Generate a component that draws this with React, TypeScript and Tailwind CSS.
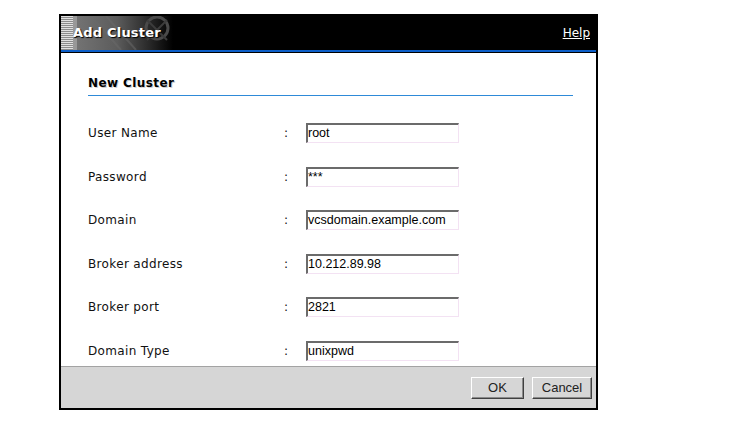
import React from 'react';

const fields = [
  { label: 'User Name', value: 'root' },
  { label: 'Password', value: '***' },
  { label: 'Domain', value: 'vcsdomain.example.com' },
  { label: 'Broker address', value: '10.212.89.98' },
  { label: 'Broker port', value: '2821' },
  { label: 'Domain Type', value: 'unixpwd' },
];

// faded grey banner graphic behind the dialog title
const HeaderArt = () => (
  <svg width="112" height="34" viewBox="0 0 112 34" className="absolute left-0 top-0">
    <defs>
      <linearGradient id="fade" x1="0" x2="1" y1="0" y2="0">
        <stop offset="0" stopColor="#7c7c7c" />
        <stop offset="0.5" stopColor="#5c5c5c" />
        <stop offset="0.8" stopColor="#262626" />
        <stop offset="1" stopColor="#000" />
      </linearGradient>
      <pattern id="lines" width="2" height="2" patternUnits="userSpaceOnUse">
        <rect width="2" height="1" fill="#e0e0e0" />
        <rect y="1" width="2" height="1" fill="#8c8c8c" />
      </pattern>
    </defs>
    <rect width="112" height="34" fill="url(#fade)" />
    <rect width="12" height="34" fill="url(#lines)" />
    <rect x="12" width="4" height="34" fill="#a8a8a8" opacity="0.7" />
    <path d="M30 0 L60 34 M45 0 L75 34" stroke="#6a6a6a" strokeWidth="2" opacity="0.5" />
    <circle cx="96" cy="12" r="11" fill="none" stroke="#4a4a4a" strokeWidth="3" />
    <path d="M86 4 L106 24 M106 4 L86 24" stroke="#3c3c3c" strokeWidth="2" />
  </svg>
);

export default function App() {
  return (
    <div className="w-[733px] h-[438px] bg-white pl-[59px] pt-[14px]" style={{ fontFamily: '"DejaVu Sans", Verdana, sans-serif' }}>
      <div className="w-[539px] h-[396px] border-2 border-black flex flex-col bg-white">
        <div className="relative h-[34px] bg-black flex items-center justify-between shrink-0">
          <HeaderArt />
          <span className="relative pl-[12px] text-[13px] font-bold tracking-[0.2px] text-white [text-shadow:1px_1px_1px_#000]">Add Cluster</span>
          <a href="#" className="relative pr-[6px] text-[12px] text-white underline">Help</a>
        </div>
        <div className="h-[2px] bg-[#0c5ec8] shrink-0" />
        <div className="h-px bg-black shrink-0" />

        <div className="flex-1 pl-[27px] pr-[23px] pt-[22px]">
          <div className="border-b border-[#2e8ad8] pb-[4px]">
            <div className="h-[16px] leading-[16px] text-[12px] font-bold tracking-[0.4px] text-black [text-shadow:1px_1px_0_#d0d0d0]">New Cluster</div>
          </div>
          <div className="mt-[25px] flex flex-col gap-[19.5px]">
            {fields.map((f) => (
              <div key={f.label} className="h-[24px] flex items-center text-[12px] tracking-[0.35px] text-[#111]">
                <span className="w-[196px]">{f.label}</span>
                <span className="w-[22px]">:</span>
                <div
                  className="w-[153px] h-[20px] border-t-2 border-l-2 border-r border-b border-t-[#6b6b6b] border-l-[#6b6b6b] border-r-[#f3e2f3] border-b-[#f3e2f3] flex items-center text-[12.5px] tracking-normal text-black"
                  style={{ fontFamily: '"Liberation Sans", Arial, sans-serif' }}
                >
                  {f.value}
                </div>
              </div>
            ))}
          </div>
        </div>

        <div
          className="h-[42px] shrink-0 bg-[#d6d6d6] border-t border-[#a3a3a3] flex items-center justify-end gap-[8px] pr-[4px] text-[13px] text-[#222]"
          style={{ fontFamily: '"Liberation Sans", Arial, sans-serif' }}
        >
          <button className="w-[53px] h-[22px] bg-[#d6d6d6] border border-t-white border-l-white border-r-[#404040] border-b-[#404040] shadow-[inset_-1px_-1px_0_#8a8a8a]">OK</button>
          <button className="w-[60px] h-[22px] bg-[#d6d6d6] border border-t-white border-l-white border-r-[#404040] border-b-[#404040] shadow-[inset_-1px_-1px_0_#8a8a8a]">Cancel</button>
        </div>
      </div>
    </div>
  );
}
